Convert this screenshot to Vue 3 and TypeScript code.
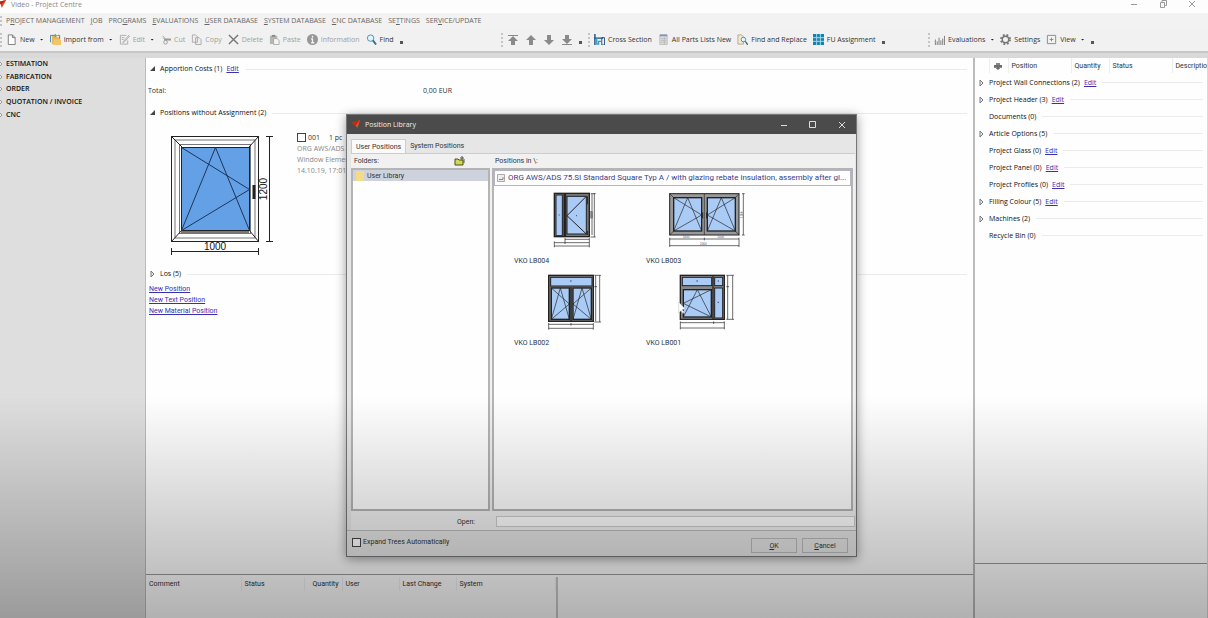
<script setup lang="ts">
import { ref } from 'vue'

interface Tool { icon: string; label: string; caret?: boolean; off?: boolean }
interface Section { label: string; open?: boolean; edit?: boolean }

// [text before the access key, access key, rest]
const menus: string[][] = [
  ['P', 'R', 'OJECT MANAGEMENT'], ['', 'J', 'OB'], ['PRO', 'G', 'RAMS'], ['', 'E', 'VALUATIONS'],
  ['', 'U', 'SER DATABASE'], ['', 'S', 'YSTEM DATABASE'], ['', 'C', 'NC DATABASE'],
  ['SE', 'T', 'TINGS'], ['SER', 'V', 'ICE/UPDATE'],
]
const editTools: Tool[] = [
  { icon: 'new', label: 'New', caret: true },
  { icon: 'import', label: 'Import from', caret: true },
  { icon: 'edit', label: 'Edit', caret: true, off: true },
  { icon: 'cut', label: 'Cut', off: true },
  { icon: 'copy', label: 'Copy', off: true },
  { icon: 'delete', label: 'Delete', off: true },
  { icon: 'paste', label: 'Paste', off: true },
  { icon: 'info', label: 'Information', off: true },
  { icon: 'find', label: 'Find' },
]
const partTools: Tool[] = [
  { icon: 'cross', label: 'Cross Section' },
  { icon: 'parts', label: 'All Parts Lists New' },
  { icon: 'replace', label: 'Find and Replace' },
  { icon: 'grid', label: 'FU Assignment' },
]
const viewTools: Tool[] = [
  { icon: 'chart', label: 'Evaluations', caret: true },
  { icon: 'gear', label: 'Settings' },
  { icon: 'view', label: 'View', caret: true },
]
const arrows = [
  { name: 'Move to top', d: 'M1 1H11V2H1ZM6 2L11 7H8V11H4V7H1Z' },
  { name: 'Move up', d: 'M6 1L11 6H8V11H4V6H1Z' },
  { name: 'Move down', d: 'M6 11L1 6H4V1H8V6H11Z' },
  { name: 'Move to bottom', d: 'M1 10H11V11H1ZM6 10L1 5H4V1H8V5H11Z' },
]
const navigation = ['ESTIMATION', 'FABRICATION', 'ORDER', 'QUOTATION / INVOICE', 'CNC']
const projectSections: Section[] = [
  { label: 'Project Wall Connections (2)', open: true, edit: true },
  { label: 'Project Header (3)', open: true, edit: true },
  { label: 'Documents (0)' },
  { label: 'Article Options (5)', open: true },
  { label: 'Project Glass (0)', edit: true },
  { label: 'Project Panel (0)', edit: true },
  { label: 'Project Profiles (0)', edit: true },
  { label: 'Filling Colour (5)', open: true, edit: true },
  { label: 'Machines (2)', open: true },
  { label: 'Recycle Bin (0)' },
]
const newLinks = ['New Position', 'New Text Position', 'New Material Position']
const logColumns = ['Comment', 'Status', 'Quantity', 'User', 'Last Change', 'System']

const selected = ref(false)
const expandTrees = ref(false)
const openName = ref('')
</script>

<template>
  <div class="app">
    <header class="titlebar">
      <svg class="logo" viewBox="0 0 10 10"><path d="M0 2L8 0L3 9L2 5Z" fill="#e2401b" /><path d="M0 2L8 0L2 5Z" fill="#b82a12" /></svg>
      <span class="caption">Video - Project Centre</span>
      <div class="winbtns">
        <button aria-label="Minimize"><svg viewBox="0 0 10 10"><path d="M2 5.500H8" /></svg></button>
        <button aria-label="Restore"><svg viewBox="0 0 10 10"><path d="M2.500 3.500H6.500V8.500H2.500ZM4 3V1.500H8.500V6.500H7" /></svg></button>
        <button aria-label="Close"><svg viewBox="0 0 10 10"><path d="M2 2L8 8M8 2L2 8" /></svg></button>
      </div>
    </header>

    <nav class="menubar">
      <i class="grip"></i>
      <button v-for="m in menus" :key="m.join('')">{{ m[0] }}<u>{{ m[1] }}</u>{{ m[2] }}</button>
    </nav>

    <div class="toolbar">
      <div v-for="(group, g) in [editTools, partTools, viewTools]" :key="g" class="group" :class="'group' + g">
        <template v-if="g === 1">
          <i class="grip"></i>
          <button v-for="a in arrows" :key="a.name" class="arrow" :aria-label="a.name">
            <svg viewBox="0 0 12 12"><path :d="a.d" fill="#8a8a8a" /></svg>
          </button>
          <i class="more"></i>
        </template>
        <i class="grip"></i>
        <button v-for="t in group" :key="t.label" class="tool" :class="{ off: t.off }">
          <svg class="icon" viewBox="0 0 12 12" fill="none">
            <path v-if="t.icon === 'new'" d="M2.500 1H7L10 4V11.500H2.500ZM7 1V4H10" stroke="#777" fill="#fff" />
            <template v-else-if="t.icon === 'import'">
              <path d="M2 2H7L8 3.500H11V11H2Z" fill="#e8b75a" /><path d="M4 6H12V12H3Z" fill="#f3c56a" />
              <path d="M0.500 9V1.500H6M5 0L7 1.500L5 3.500M8 1.500H10.500V5" stroke="#2f86b5" />
            </template>
            <path v-else-if="t.icon === 'edit'" d="M8 1.500H1.500V11H9.500V7M11 1L5 8L4 9.500L6 8.500L12 2M3 4H6M3 6H5" stroke="#aaa" />
            <template v-else-if="t.icon === 'cut'">
              <path d="M0 3.500L5 5H12V7H5L4 5Z" fill="#999" /><circle cx="6" cy="9" r="2" stroke="#999" /><path d="M3 2L7 7" stroke="#999" />
            </template>
            <path v-else-if="t.icon === 'copy'" d="M1.500 1H5L7 3V9H1.500ZM5 4H9L11 6V11.500H5Z" stroke="#aaa" fill="#eee" />
            <path v-else-if="t.icon === 'delete'" d="M1 1L11 11M11 1L1 11" stroke="#777" stroke-width="1.500" />
            <template v-else-if="t.icon === 'paste'">
              <path d="M1 2H9V11H1Z" fill="#b5b5b5" /><path d="M3 1H7V3H3Z" fill="#888" /><path d="M5 5H9L11 7V11.500H5Z" fill="#f4f4f4" stroke="#aaa" />
            </template>
            <template v-else-if="t.icon === 'info'">
              <circle cx="6" cy="6" r="6" fill="#969696" /><path d="M6 2V4M6 5V10M4.500 5.500H6M4.500 9.500H8" stroke="#f4f4f4" stroke-width="1.500" />
            </template>
            <template v-else-if="t.icon === 'find'">
              <circle cx="5" cy="4.500" r="3.500" stroke="#3a92bd" fill="#e5f3fa" /><path d="M7.500 7L11 11.500" stroke="#33708f" stroke-width="2" />
            </template>
            <template v-else-if="t.icon === 'cross'">
              <path d="M1 0V12M0 4.500H10" stroke="#1c4f7c" stroke-width="1.500" /><path d="M8.500 4H11.500V12H8.500Z" stroke="#1c4f7c" /><path d="M3 4V11H5V8H8" stroke="#3b9bc8" stroke-width="1.500" />
            </template>
            <template v-else-if="t.icon === 'parts'">
              <path d="M2 1H10V11.500H2Z" fill="#ddd" stroke="#bbb" /><path d="M2 1.500H10" stroke="#8790c4" stroke-width="2" /><path d="M3 5H9M3 7H9M3 9H9M7 3V11" stroke="#bbb" />
            </template>
            <template v-else-if="t.icon === 'replace'">
              <path d="M1 1H5L7 3V11H1Z" stroke="#b7a480" fill="#f3ead5" /><circle cx="7" cy="6" r="2.500" stroke="#3a92bd" fill="#e5f3fa" /><path d="M9 8L12 12" stroke="#33708f" stroke-width="1.500" />
            </template>
            <template v-else-if="t.icon === 'grid'">
              <path d="M0 0H12V12H0Z" fill="#1583ad" /><path d="M0 4H12M0 8H12M4 0V12M8 0V12" stroke="#b5dbea" />
            </template>
            <path v-else-if="t.icon === 'chart'" d="M1.500 12V6M3.500 12V8M5.500 12V4M7.500 12V7M9.500 12V5M11.500 12V2" stroke="#777" />
            <template v-else-if="t.icon === 'gear'">
              <circle cx="6" cy="6" r="5" stroke="#777" stroke-width="2" stroke-dasharray="2 2" /><circle cx="6" cy="6" r="3.500" stroke="#777" stroke-width="1.500" />
            </template>
            <path v-else d="M1.500 1.500H10.500V10.500H1.500ZM6 4V8M4 6H8" stroke="#888" />
          </svg>
          <span>{{ t.label }}</span>
          <i v-if="t.caret" class="caret"></i>
        </button>
        <i class="more"></i>
      </div>
    </div>

    <div class="workspace">
      <aside class="sidebar">
        <nav>
          <button v-for="n in navigation" :key="n"><svg class="tri" viewBox="0 0 6 8"><path d="M1 1L4 4L1 7Z" fill="#eee" stroke="#999" /></svg>{{ n }}</button>
        </nav>
      </aside>

      <main class="centre">
        <section class="content">
          <h2 class="head"><svg class="tri" viewBox="0 0 6 8"><path d="M5 1V6H0Z" fill="#444" /></svg>Apportion Costs (1)<a href="#">Edit</a><i class="rule"></i></h2>
          <div class="total"><span>Total:</span><span>0,00 EUR</span></div>
          <h2 class="head"><svg class="tri" viewBox="0 0 6 8"><path d="M5 1V6H0Z" fill="#444" /></svg>Positions without Assignment (2)<i class="rule"></i></h2>
          <div class="position">
            <svg class="drawing" viewBox="0 0 106 122" fill="none" stroke="#222">
              <rect x="1.500" y="1.500" width="87" height="105" fill="#fdfdfd" />
              <rect x="5" y="5" width="80" height="98" stroke="#777" />
              <rect x="9.500" y="9.500" width="71" height="89" stroke="#777" />
              <path d="M1 1L12 12M89 1L79 12M1 107L12 95M89 107L79 95" />
              <path d="M11 97H79" stroke="#777" stroke-width="2" />
              <rect x="11.500" y="12.500" width="68" height="83" fill="#64a0e6" />
              <path d="M11.500 95.500L45.500 12.500L79.500 95.500M11.500 12.500L79.500 54.500L11.500 95.500" stroke="#1d3557" />
              <path d="M84 50V64" stroke-width="3" />
              <path d="M99.500 1.500V106.500M96 1.500H103M96 106.500H103M1.500 116.500H88.500M1.500 120V113M88.500 120V113" />
              <g class="dims" stroke="none" fill="#111">
                <text x="45" y="115" text-anchor="middle">1000</text>
                <text transform="translate(97 54) rotate(-90)" text-anchor="middle">1200</text>
              </g>
            </svg>
            <div class="details">
              <label><input v-model="selected" type="checkbox" />001<b>1 pc</b></label>
              <p>ORG AWS/ADS</p>
              <p>Window Element</p>
              <p>14.10.19, 17:01</p>
            </div>
          </div>
          <h2 class="head"><svg class="tri" viewBox="0 0 6 8"><path d="M1 1L4 4L1 7Z" fill="#eee" stroke="#777" /></svg>Los (5)<i class="rule"></i></h2>
          <ul class="links"><li v-for="l in newLinks" :key="l"><a href="#">{{ l }}</a></li></ul>
        </section>
        <section class="log">
          <table>
            <thead><tr><th v-for="c in logColumns" :key="c" :class="'col-' + c.split(' ')[0].toLowerCase()">{{ c }}</th></tr></thead>
          </table>
        </section>
      </main>

      <aside class="project">
        <section class="content">
          <table>
            <thead><tr>
              <th class="gap"></th>
              <th class="print"><svg viewBox="0 0 10 10" aria-label="Print"><path d="M3 2H7V4H9V7H7V8H3V7H1V4H3Z" fill="#888" /><path d="M1 5H9M5 6V9" stroke="#555" /></svg></th>
              <th class="pos">Position</th><th class="qty">Quantity</th><th class="state">Status</th><th>Description</th>
            </tr></thead>
          </table>
          <h2 v-for="s in projectSections" :key="s.label" class="head">
            <svg class="tri" viewBox="0 0 6 8"><path v-if="s.open" d="M1 1L4 4L1 7Z" fill="#eee" stroke="#777" /></svg>{{ s.label }}<a v-if="s.edit" href="#">Edit</a><i class="rule"></i>
          </h2>
        </section>
        <section class="below"></section>
      </aside>
    </div>

    <div class="dialog" role="dialog" aria-label="Position Library">
      <header class="dlgtitle">
        <svg class="logo" viewBox="0 0 10 10"><path d="M0 3L9 0L6 9L4 6Z" fill="#ee4a22" /><path d="M0 3L9 0L4 6Z" fill="#b92d15" /></svg>
        <span class="caption">Position Library</span>
        <div class="winbtns">
          <button aria-label="Minimize"><svg viewBox="0 0 10 10"><path d="M2 5.500H8" /></svg></button>
          <button aria-label="Maximize"><svg viewBox="0 0 10 10"><path d="M1.500 1.500H7.500V7.500H1.500Z" /></svg></button>
          <button aria-label="Close"><svg viewBox="0 0 10 10"><path d="M2 2L8 8M8 2L2 8" /></svg></button>
        </div>
      </header>
      <div class="tabs" role="tablist">
        <button role="tab" aria-selected="true" class="active">User Positions</button>
        <button role="tab" aria-selected="false">System Positions</button>
      </div>
      <div class="page">
        <div class="labels">
          <span class="folders">Folders:
            <button aria-label="New folder"><svg viewBox="0 0 11 10"><path d="M1 3H4L5 4H9V9H1Z" fill="#cfd858" stroke="#4b4f16" /><path d="M6 2H10M8 0V4M10 3V7" stroke="#555" /></svg></button>
          </span>
          <span>Positions in \:</span>
        </div>
        <div class="panes">
          <div class="tree"><button class="node"><i class="folder"></i>User Library</button></div>
          <div class="library">
            <div class="system">
              <svg viewBox="0 0 8 8"><path d="M0.500 0.500H7.500V7.500H0.500Z" fill="#eee" stroke="#aaa" /><path d="M2 5.500H6V3" stroke="#888" fill="none" /></svg>
              <span>ORG AWS/ADS 75.SI Standard Square Typ A / with glazing rebate insulation, assembly after gl...</span>
            </div>
            <div class="thumbs">
              <figure>
                <svg viewBox="72 75 300 180" fill="none" stroke="#222" stroke-width="3">
                  <rect x="193" y="85" width="105" height="130" fill="#777" stroke-width="4" />
                  <rect x="198" y="90" width="19" height="122" fill="#a9cbf5" />
                  <rect x="222" y="86" width="5" height="128" fill="#222" />
                  <rect x="231" y="94" width="58" height="113" fill="#a9cbf5" />
                  <path d="M289 94L231 152L289 207M292 94V118M292 198V210" />
                  <path d="M206 150H209M258 152H261" stroke="#446" />
                  <path d="M306 86V210M313 84V216M193 233H298M193 243H298M225 223H298" stroke-width="2" />
                  <path d="M193 229V247M225 219V237M298 219V247M302 86H317M302 216H317M306 140V160" stroke-width="2" />
                  <path d="M304 138V160" stroke="#777" stroke-width="6" />
                </svg>
                <figcaption>VKO LB004</figcaption>
              </figure>
              <figure>
                <svg viewBox="468 75 300 180" fill="none" stroke="#222" stroke-width="3">
                  <rect x="539" y="86" width="208" height="124" fill="#999" />
                  <rect x="551" y="98" width="84" height="100" fill="#a9cbf5" stroke-width="4" />
                  <rect x="652" y="98" width="84" height="100" fill="#a9cbf5" stroke-width="4" />
                  <path d="M643 86V210M539 86L551 98M747 86L736 98M539 210L551 198M747 210L736 198" stroke-width="2" />
                  <path d="M551 198L593 98L635 198M551 98L635 150L551 198M652 198L694 98L736 198M736 98L652 150L736 198" stroke-width="2" />
                  <path d="M638 142V160M650 142V160" />
                  <path d="M760 86V210M756 86H764M756 210H764M539 222H747M539 242H747M539 218V246M643 218V226M747 218V246" stroke-width="2" />
                  <g class="tiny" stroke="none" fill="#555"><text x="578" y="220">1000</text><text x="682" y="220">1000</text><text x="630" y="240">2000</text><text transform="translate(758 159) rotate(-90)">1200</text></g>
                </svg>
                <figcaption>VKO LB003</figcaption>
              </figure>
              <figure>
                <svg viewBox="72 321 300 180" fill="none" stroke="#222" stroke-width="3">
                  <rect x="176" y="331" width="134" height="138" fill="#777" stroke-width="4" />
                  <rect x="182" y="337" width="124" height="26" fill="#a9cbf5" />
                  <rect x="184" y="369" width="54" height="94" fill="#a9cbf5" stroke-width="4" />
                  <rect x="249" y="369" width="55" height="94" fill="#a9cbf5" stroke-width="4" />
                  <path d="M243 366V469" stroke-width="4" />
                  <path d="M184 463L211 369L238 463M184 369L238 417L184 463M249 463L276 369L304 463M304 369L249 417L304 463" stroke-width="2" />
                  <path d="M240 348H245" stroke="#446" />
                  <path d="M317 331V469M329 331V471M313 331H333M313 365H321M313 471H333M176 478H310M176 490H310M176 474V494M243 474V482M310 474V494" stroke-width="2" />
                </svg>
                <figcaption>VKO LB002</figcaption>
              </figure>
              <figure>
                <svg viewBox="468 321 300 180" fill="none" stroke="#222" stroke-width="3">
                  <rect x="571" y="331" width="132" height="132" fill="#888" stroke-width="4" />
                  <rect x="577" y="337" width="88" height="25" fill="#a9cbf5" />
                  <rect x="674" y="337" width="24" height="25" fill="#a9cbf5" />
                  <rect x="674" y="369" width="24" height="90" fill="#a9cbf5" />
                  <rect x="580" y="374" width="84" height="82" fill="#a9cbf5" stroke-width="4" />
                  <path d="M669 331V463" stroke-width="4" />
                  <path d="M580 456L622 374L664 456M664 374L580 415L664 456" stroke-width="2" />
                  <path d="M619 348H624M683 348H687M683 412H687" stroke="#446" />
                  <path d="M713 331V463M728 331V463M709 331H732M709 365H717M709 463H732M571 473H703M571 489H703M571 469V493M671 469V477M703 469V493" stroke-width="2" />
                  <path d="M566 411V444L573 437L579 446L583 440L576 434L586 432Z" fill="#fff" stroke="#999" stroke-width="1" />
                </svg>
                <figcaption>VKO LB001</figcaption>
              </figure>
            </div>
          </div>
        </div>
        <div class="openrow"><label for="open-name">Open:</label><input id="open-name" v-model="openName" type="text" /></div>
      </div>
      <footer class="dlgfoot">
        <label><input v-model="expandTrees" type="checkbox" />Expand Trees Automatically</label>
        <button><u>O</u>K</button>
        <button><u>C</u>ancel</button>
      </footer>
    </div>
    <div class="shade"></div>
  </div>
</template>

<style>
body { margin: 0; }
</style>

<style scoped>
.app { position: relative; display: flex; flex-direction: column; height: 100vh; overflow: hidden; background: #d9d9d9; color: #333; font: 7px/10px "Open Sans", "Noto Sans", sans-serif; }
.app *, .app *::before { box-sizing: border-box; }
button { display: inline-flex; align-items: center; margin: 0; padding: 0; border: 0; background: none; color: inherit; font: inherit; white-space: pre; }
a { color: #3a2fb4; text-decoration: underline; font-weight: 400; }
svg { flex: none; display: block; }
h2, p, ul, figure { margin: 0; padding: 0; }
th { padding: 0; font-weight: 400; text-align: left; }
table { border-collapse: collapse; table-layout: fixed; }
input { margin: 0; font: inherit; }
input[type="checkbox"] { appearance: none; width: 9px; height: 9px; border: 1px solid #444; background: #fff; }
input[type="checkbox"]:checked { background: #444; }
.links, table, .tabs, .page, .dlgfoot { font-family: Roboto, "Open Sans", sans-serif; }

.titlebar { display: flex; align-items: center; height: 13px; background: #fdfdfd; color: #888; }
.logo { width: 9px; height: 9px; }
.titlebar .caption { flex: 1; padding-left: 2px; margin-top: -3px; }
.winbtns { display: flex; gap: 19px; }
.winbtns svg { width: 10px; height: 10px; fill: none; stroke: #999; }
.titlebar .winbtns { padding-right: 11px; margin-top: -6px; }
.titlebar .logo { margin: -4px 1px 0 -1px; }

.menubar { display: flex; align-items: center; gap: 6px; height: 15px; background: #f2f2f2; color: #666; }
.grip { flex: none; width: 2px; height: 14px; margin-right: -2px; border-left: 2px dotted #c4c4c4; }
.menubar .grip { height: 10px; }

.toolbar { display: flex; height: 25px; background: #f1f1f1; border-bottom: 2px solid #c6c6c6; }
.group { display: flex; align-items: center; gap: 6px; }
.group0 { flex: 0 0 501px; }
.group1 { flex: 0 0 427px; }
.tool { gap: 3px; }
.off { color: #a0a0a0; }
.icon { width: 11px; height: 11px; }
.arrow svg { width: 12px; height: 12px; }
.caret { width: 4px; height: 2px; margin-left: 2px; background: #222; clip-path: polygon(0 0, 100% 0, 50% 100%); }
.more { width: 3px; height: 3px; margin-top: 6px; background: #555; }

.workspace { flex: 1; min-height: 0; display: flex; padding: 5px 1px 0 0; }
.sidebar { flex: 0 0 145px; background: #dedede; color: #111; font-weight: 600; }
.sidebar nav { display: grid; height: 63px; }
.tri { width: 6px; height: 8px; }
.sidebar .tri { margin-right: 2px; margin-left: -2px; }

.centre { flex: 1; min-width: 0; display: flex; flex-direction: column; border-left: 1px solid #bbb; background: #fefefe; }
.content { flex: 1; }
.centre .content { padding-top: 1px; }
.head { display: flex; align-items: center; height: 20px; font-size: 7px; line-height: 10px; font-weight: 500; color: #111; white-space: nowrap; }
.centre .head { padding: 0 6px 0 4px; }
.head .tri { margin-right: 4px; }
.head a { margin-left: 4px; }
.rule { flex: 1; height: 1px; margin-left: 6px; background: #ebebeb; }
.total { display: grid; grid-template-columns: 275px 1fr; align-items: center; height: 24px; padding-left: 2px; }
.position { display: flex; gap: 21px; height: 141px; padding: 9px 0 0 24px; }
.drawing { width: 106px; height: 122px; margin-top: 3px; }
.dims { font: 10px "Liberation Sans", Arial, sans-serif; }
.details { color: #888; line-height: 11px; white-space: nowrap; }
.details label { display: flex; align-items: center; color: #333; }
.details input { margin-right: 2px; }
.details b { margin-left: 9px; font-weight: 400; }
.links { list-style: none; padding: 0 0 0 3px; line-height: 11px; }
.log { height: 44px; border-top: 1px solid #999; display: flex; padding-top: 2px; }
.log table { align-self: flex-start; width: 410px; }
.log::after { content: ""; border-left: 2px solid #c8c8c8; }
.log th { height: 14px; padding-left: 3px; border-right: 1px solid #f0f0f0; }
.col-comment { width: 95px; }
.col-status { width: 63px; }
.log .col-quantity { width: 38px; padding-left: 8px; }
.col-user { width: 57px; }
.col-last { width: 57px; }

.project { flex: 0 0 234px; display: flex; flex-direction: column; overflow: hidden; border-left: 2px solid #bbb; background: #fefefe; }
.project table { width: 250px; margin-bottom: 1px; }
.project th { height: 15px; padding-left: 3px; border-right: 1px solid #ededed; }
.gap { width: 14px; }
.project .print { width: 19px; }
.print svg { width: 10px; height: 10px; }
.pos { width: 63px; }
.qty { width: 38px; }
.state { width: 63px; }
.project .head { height: 17px; padding: 0 4px; }
.below { height: 55px; border-top: 1px solid #999; }

.dialog { position: absolute; left: 346px; top: 114px; width: 511px; height: 443px; display: flex; flex-direction: column; border: 1px solid #777; background: #e6e6e6; box-shadow: 0 2px 10px rgba(0, 0, 0, 0.4); }
.dlgtitle { display: flex; align-items: center; height: 19px; padding: 0 9px 0 5px; background: #4b4b4b; color: #eee; }
.dlgtitle .caption { flex: 1; padding-left: 4px; }
.dlgtitle .winbtns svg { stroke: #ddd; }
.tabs { display: flex; height: 19px; padding: 5px 0 0 4px; }
.tabs button { padding: 0 4px; }
.tabs .active { border: 1px solid #ccc; border-bottom: 0; background: #fafafa; }
.page { flex: 1; min-height: 0; display: flex; flex-direction: column; margin: 0 1px 0 4px; border-top: 1px solid #ccc; background: #f1f1f1; }
.labels { display: grid; grid-template-columns: 141px 1fr; align-items: center; height: 14px; padding-left: 3px; }
.folders { display: flex; justify-content: space-between; padding-right: 30px; }
.folders svg { width: 11px; height: 10px; }
.panes { flex: 1; min-height: 0; display: flex; gap: 2px; padding-right: 2px; }
.tree, .library { border: 2px solid #b4b4b4; background: #fefefe; }
.tree { flex: 0 0 139px; }
.node { width: 100%; height: 11px; background: #cdd2dc; }
.folder { width: 8px; height: 10px; margin: 0 3px 0 3px; background: #f5db85; }
.library { flex: 1; min-width: 0; }
.system { display: flex; align-items: center; gap: 3px; height: 16px; padding: 0 2px; border: 1px solid #b5b5c0; color: #3c3c86; font-size: 8px; }
.system svg { width: 8px; height: 8px; }
.system span { overflow: hidden; text-overflow: ellipsis; white-space: nowrap; }
.thumbs { display: grid; grid-template-columns: 132px 132px; padding: 4px 0 0 20px; }
figure { height: 82px; }
figure svg { width: 100px; height: 60px; }
figcaption { padding-top: 6px; }
.tiny { font: 9px "Liberation Sans", Arial, sans-serif; }
.openrow { display: flex; align-items: center; height: 19px; padding-top: 2px; }
.openrow label { flex: 0 0 145px; padding-left: 106px; }
.openrow input { flex: 1; min-width: 0; height: 11px; padding: 0 2px; border: 1px solid #ccc; background: #fff; }
.dlgfoot { display: flex; align-items: flex-start; gap: 5px; height: 26px; padding: 6px 8px 0 5px; border-top: 1px solid #bbb; }
.dlgfoot label { flex: 1; display: flex; align-items: center; gap: 2px; }
.dlgfoot button { justify-content: center; width: 46px; height: 15px; margin-top: 1px; border: 1px solid #bbb; }
.shade { position: absolute; inset: 64% 0 0; pointer-events: none; background: linear-gradient(rgba(0, 0, 0, 0), rgba(0, 0, 0, 0.3)); }
</style>
